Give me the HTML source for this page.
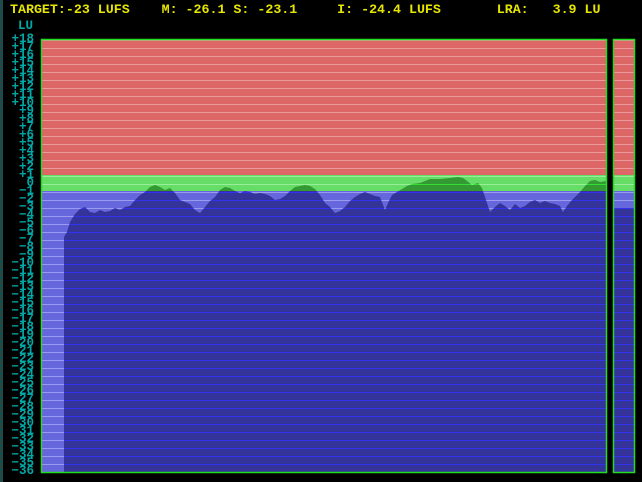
<!DOCTYPE html>
<html><head><style>
html,body{margin:0;padding:0;background:#000;width:642px;height:482px;overflow:hidden;position:relative}
.t{position:absolute;font-family:"Liberation Mono","DejaVu Sans Mono",monospace;white-space:pre;font-weight:bold}
#top{left:10px;top:2px;font-size:13.3px;color:#e6e600;line-height:16px}
.l{position:absolute;right:608px;width:40px;text-align:right;font-family:"Liberation Mono",monospace;font-size:12.5px;line-height:8px;color:#00a8a8;font-weight:bold;left:-6px}
</style></head><body>
<div style="position:absolute;left:0;top:0;width:3px;height:482px;background:#1e4a4a"></div>
<div id="top" class="t">TARGET:-23 LUFS    M: -26.1 S: -23.1     I: -24.4 LUFS       LRA:   3.9 LU</div>
<div class="t" style="left:18px;top:20px;font-size:12.5px;color:#00a8a8;line-height:12px">LU</div>
<div id="labels"></div>
<svg width="642" height="482" style="position:absolute;left:0;top:0">
<defs>
<pattern id="pr" x="0" y="40" width="8" height="8" patternUnits="userSpaceOnUse"><rect width="8" height="8" fill="#dd6666"/><rect y="0" width="8" height="1" fill="#e99a9a"/></pattern>
<pattern id="pg" x="0" y="40" width="8" height="8" patternUnits="userSpaceOnUse"><rect width="8" height="8" fill="#66dd66"/><rect y="0" width="8" height="1" fill="#9aee9a"/></pattern>
<pattern id="pb" x="0" y="40" width="8" height="8" patternUnits="userSpaceOnUse"><rect width="8" height="8" fill="#6666dd"/><rect y="0" width="8" height="1" fill="#9a9aee"/></pattern>
<pattern id="pdg" x="0" y="40" width="8" height="8" patternUnits="userSpaceOnUse"><rect width="8" height="8" fill="#339933"/><rect y="0" width="8" height="1" fill="#33dd33"/></pattern>
<pattern id="pdb" x="0" y="40" width="8" height="8" patternUnits="userSpaceOnUse"><rect width="8" height="8" fill="#333399"/><rect y="0" width="8" height="1" fill="#3333ee"/></pattern>
<clipPath id="cv"><polygon points="64,472 64,237 67,232 70,222 75,214 80,209 85,207 90,212 95,213 100,210 105,212 110,211 115,208 120,210 125,207 130,206 135,200 140,195 145,192 150,187 155,185 160,187 165,190 170,188 175,193 180,200 185,202 190,204 195,210 200,213 205,207 210,201 215,197 220,190 225,187 230,188 235,191 240,193 245,191 250,192 255,194 260,193 265,194 270,196 275,200 280,199 285,196 290,191 295,187 300,186 305,185 310,186 315,189 320,195 325,203 330,207 335,213 340,211 345,207 350,201 355,197 360,194 365,192 370,194 375,196 380,197 385,210 388,203 392,195 397,192 402,189 407,186 412,184 420,183 425,181 430,179 440,179 450,178 458,177 463,178 467,181 472,185 478,183 482,188 486,200 490,212 495,207 500,203 505,206 510,210 515,204 520,208 525,206 530,202 535,200 540,203 545,201 550,203 555,204 560,206 563,212 567,206 571,201 575,197 580,192 585,186 590,181 595,180 600,182 606,181 606,472"/></clipPath>
</defs>
<rect x="41" y="39" width="566" height="434" fill="#000"/>
<rect x="42" y="40" width="564" height="135" fill="url(#pr)"/>
<rect x="42" y="175" width="564" height="16" fill="url(#pg)"/>
<rect x="42" y="191" width="564" height="281" fill="url(#pb)"/>
<g clip-path="url(#cv)">
<rect x="42" y="175" width="564" height="16" fill="url(#pdg)"/>
<rect x="42" y="191" width="564" height="281" fill="url(#pdb)"/>
</g>
<rect x="41.5" y="39.5" width="565" height="433" fill="none" stroke="#22dd22" stroke-width="1.5"/>
<rect x="614" y="40" width="20" height="135" fill="url(#pr)"/>
<rect x="614" y="175" width="20" height="16" fill="url(#pg)"/>
<rect x="614" y="191" width="20" height="17" fill="url(#pb)"/>
<rect x="614" y="208" width="20" height="264" fill="url(#pdb)"/>
<rect x="613.5" y="39.5" width="21" height="433" fill="none" stroke="#22dd22" stroke-width="1.5"/>
</svg>
<script>
var h='';
for(var k=0;k<55;k++){var v=18-k;var s=v>0?'+'+v:(v==0?'0':'\u2212'+(-v));
h+='<div class="l" style="top:'+(35+8*k)+'px">'+s+'</div>';}
document.getElementById('labels').innerHTML=h;
</script>
</body></html>
